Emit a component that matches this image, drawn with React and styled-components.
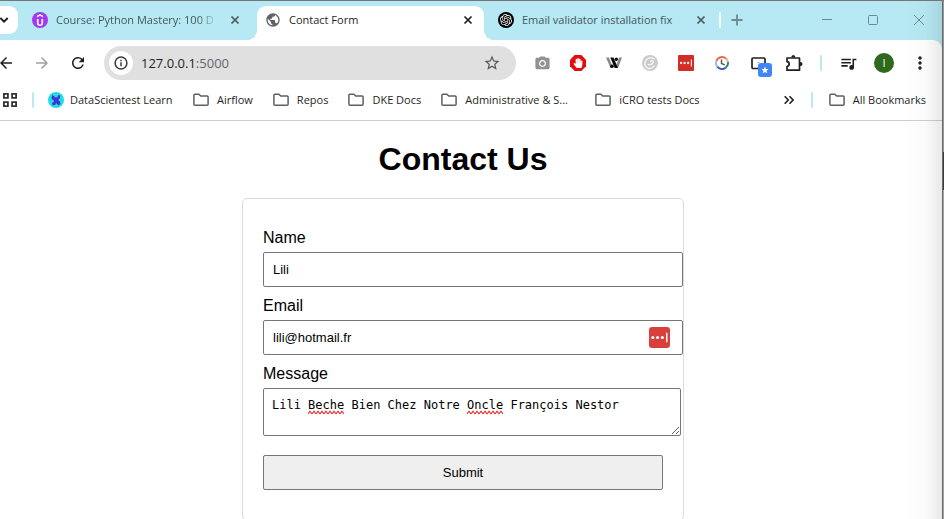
import React from "react";
import styled, { createGlobalStyle, css } from "styled-components";
import {
  MdArrowBack,
  MdArrowForward,
  MdRefresh,
  MdStarBorder,
  MdPublic,
  MdQueueMusic,
  MdMoreVert,
  MdPhotoCamera,
} from "react-icons/md";
import { FaHandPaper } from "react-icons/fa";
import { SiOpenai, SiUdemy } from "react-icons/si";

const GlobalStyle = createGlobalStyle`
  *, *::before, *::after { box-sizing: border-box; }
  body { margin: 0; background: #fff; }
  button { border: 0; padding: 0; background: none; color: inherit; font: inherit; }
  svg { display: block; flex: none; }
`;

const theme = {
  strip: "#b6e9f3",
  ink: "#1f1f23",
  muted: "#46565c",
  ui: '"Open Sans", "Noto Sans", sans-serif',
  page: '"Liberation Sans", Arial, sans-serif',
  mono: '"DejaVu Sans Mono", monospace',
};

const Desktop = styled.div`
  display: flex;
  height: 100vh;
  overflow: hidden;
  border-top: 1px solid #767676;
`;

const BrowserWindow = styled.div`
  position: relative;
  flex: 1;
  min-width: 0;
  display: flex;
  flex-direction: column;
  overflow: hidden;
  background: #fff;
  color: ${theme.ink};
  font: 11px/16px ${theme.ui};
  & > * {
    flex-shrink: 0;
  }
  &::after {
    content: "";
    position: absolute;
    inset: 0 0 0 auto;
    width: 40px;
    pointer-events: none;
    background: linear-gradient(to right, rgba(0, 0, 0, 0), rgba(0, 0, 0, 0.02) 60%, rgba(0, 0, 0, 0.09));
  }
`;

const WindowEdge = styled.div`
  width: 2px;
  border-left: 1px solid #6a6a6a;
  background: linear-gradient(#999 151px, #3c3c3c 151px, #3c3c3c 189px, #a6a6a6 189px);
`;

/* ---------- tab strip ---------- */

const TabStrip = styled.header`
  display: flex;
  align-items: flex-end;
  height: 39px;
  background: ${theme.strip};
`;

const TabSearch = styled.button`
  display: flex;
  align-items: center;
  width: 18px;
  height: 28px;
  margin: 0 6px 6px 0;
  border-radius: 0 9px 9px 0;
  background: #fff;
`;

const Tabs = styled.div`
  display: flex;
  gap: 6px;
  flex: 0 1 693px;
  min-width: 0;
`;

const Foot = css`
  content: "";
  position: absolute;
  bottom: 0;
  width: 10px;
  height: 10px;
`;

const Tab = styled.div`
  position: relative;
  display: flex;
  align-items: center;
  flex: 1 1 0;
  min-width: 0;
  height: 34px;
  padding: 0 8px 6px;
  color: ${theme.muted};
  ${(p) =>
    p.$active &&
    css`
      color: ${theme.ink};
      background: #fff;
      border-radius: 9px 9px 0 0;
      &::before {
        ${Foot}
        left: -10px;
        background: radial-gradient(circle at 0 0, transparent 10px, #fff 10px);
      }
      &::after {
        ${Foot}
        right: -10px;
        background: radial-gradient(circle at 100% 0, transparent 10px, #fff 10px);
      }
    `}
`;

const TabTitle = styled.span`
  flex: 1;
  min-width: 0;
  margin: 0 9px 0 8px;
  overflow: hidden;
  white-space: nowrap;
  ${(p) => p.$fade && css`mask-image: linear-gradient(to left, transparent, #000 20px);`}
`;

const Disc = styled.span`
  display: flex;
  align-items: center;
  justify-content: center;
  flex: none;
  width: ${(p) => p.$size}px;
  height: ${(p) => p.$size}px;
  border-radius: 50%;
  background: ${(p) => p.$fill};
  color: #fff;
`;

const StripButton = styled.button`
  display: flex;
  align-items: center;
  justify-content: center;
  width: ${(p) => p.$width}px;
  height: 28px;
  margin-bottom: 6px;
  color: #6c8a92;
`;

const Spacer = styled.div`
  flex: 1;
`;

const Divider = styled.span`
  flex: none;
  width: 2px;
  height: 16px;
  margin: ${(p) => p.$margin};
  border-radius: 1px;
  background: ${(p) => p.$fill || theme.strip};
`;

/* ---------- toolbar ---------- */

const Toolbar = styled.nav`
  display: flex;
  align-items: center;
  height: 46px;
  padding-right: 4px;
`;

const ToolbarWrap = styled.div`
  background: ${theme.strip};
  & > nav {
    background: #fff;
    border-top-right-radius: 9px;
  }
`;

const Group = styled.div`
  display: flex;
  align-items: center;
  margin-left: ${(p) => p.$pull || 0}px;
`;

const IconButton = styled.button`
  display: flex;
  align-items: center;
  justify-content: center;
  width: 36px;
  height: 36px;
  color: ${(p) => p.$color || theme.ink};
`;

const Omnibox = styled.div`
  display: flex;
  align-items: center;
  flex: 1;
  min-width: 0;
  height: 34px;
  margin: 0 8px;
  padding: 0 6px 0 5px;
  border-radius: 17px;
  background: #e0e0e0;
`;

const Address = styled.div`
  flex: 1;
  min-width: 0;
  margin-left: 8px;
  white-space: nowrap;
  font-size: 13px;
  span { color: #64646a; }
`;

const LastPass = styled.span`
  display: flex;
  align-items: center;
  justify-content: center;
  width: ${(p) => p.$size}px;
  height: ${(p) => p.$size}px;
  border-radius: ${(p) => p.$radius}px;
  background: ${(p) => p.$fill};
`;

/* ---------- bookmarks ---------- */

const BookmarksBar = styled.nav`
  display: flex;
  align-items: center;
  height: 35px;
  padding: 0 16px 6px 3px;
  border-bottom: 1px solid #cfcfcf;
`;

const BookmarkList = styled.div`
  display: flex;
  gap: 20px;
`;

const Bookmark = styled.a`
  display: flex;
  align-items: center;
  gap: ${(p) => p.$gap || 8}px;
  min-width: ${(p) => p.$minWidth || 0}px;
  white-space: nowrap;
  color: ${theme.ink};
  text-decoration: none;
`;

const BareButton = styled.button`
  display: flex;
`;

/* ---------- page ---------- */

const Page = styled.main`
  flex: 1;
  padding: 0 16px 0 0;
  color: #000;
  font: 16px/18px ${theme.page};
`;

const Heading = styled.h1`
  margin: 20px 0;
  text-align: center;
  font-size: 32px;
  line-height: 37px;
`;

const Card = styled.form`
  width: 442px;
  max-width: 100%;
  margin: 0 auto;
  padding: 20px 20px 30px;
  border: 1px solid #ddd;
  border-radius: 5px;
`;

const Label = styled.label`
  display: block;
  margin: 10px 0 5px;
`;

const boxed = css`
  display: block;
  border: 1px solid #767676;
  border-radius: 2px;
  color: #000;
  background: #fff;
  outline: 0;
`;

const FieldWrap = styled.div`
  position: relative;
  width: calc(100% + ${(p) => p.$extra}px);
`;

const TextInput = styled.input`
  ${boxed}
  width: 100%;
  height: 35px;
  padding: 0 9px;
  font: 13px ${theme.page};
`;

const FieldBadge = styled.span`
  position: absolute;
  right: 13px;
  top: 7px;
`;

const MessageBox = styled.textarea`
  ${boxed}
  width: 100%;
  height: 48px;
  padding: 8px;
  font: 12px/16px ${theme.mono};
  resize: both;
`;

const Squiggle = styled.svg`
  position: absolute;
  top: 22px;
  left: calc(9px + ${(p) => p.$start}ch);
  width: ${(p) => p.$length}ch;
  height: 5px;
  font: 12px/16px ${theme.mono};
  pointer-events: none;
`;

const Submit = styled.button`
  ${boxed}
  width: 100%;
  height: 35px;
  margin-top: 19px;
  background: #efefef;
  font: 13px ${theme.page};
`;

/* ---------- drawings ---------- */

const CloseIcon = () => (
  <svg width="16" height="16" viewBox="0 0 16 16" stroke="currentColor" strokeWidth="1.7">
    <path d="M4.500 4.500l7 7M11.500 4.500l-7 7" />
  </svg>
);

const FolderIcon = () => (
  <svg width="16" height="14" viewBox="0 0 16 14" fill="none" stroke="#5d5f62" strokeWidth="1.500" strokeLinejoin="round">
    <path d="M.9 2.200c0-.6.4-1 1-1h4l1.800 1.900h6.400c.6 0 1 .4 1 1v7.200c0 .6-.4 1-1 1H1.900c-.6 0-1-.4-1-1z" />
  </svg>
);

const InfoIcon = () => (
  <svg width="14" height="14" viewBox="0 0 14 14" fill="none" stroke="#3c3c40" strokeWidth="1.500">
    <circle cx="7" cy="7" r="5.900" />
    <path d="M7 6.200v4M7 3.700v1.500" />
  </svg>
);

const WIcon = () => (
  <svg width="16" height="12" viewBox="0 0 16 12">
    <path d="M0 .5h3l4 10.500H4.500z" fill="#8a8a8a" />
    <path d="M13 .5h3L12 11H9.500z" fill="#8a8a8a" />
    <path d="M4.300.5h3.200L12 11H8.700z" fill="#0c0c0c" />
    <circle cx="10.300" cy="2.200" r="1.700" fill="#0c0c0c" />
    <circle cx="6" cy="9.300" r="1.800" fill="#0c0c0c" />
  </svg>
);

const SwirlIcon = () => (
  <svg width="16" height="16" viewBox="0 0 16 16">
    <circle cx="8" cy="8" r="8" fill="#cbcbcb" />
    <g fill="none" stroke="#f8f8f8" strokeWidth="1.300" strokeLinecap="round">
      <path d="M12.200 3.800C9.500 2 5.500 2.700 3.700 5.600c-1.800 3-.7 6.800 2.600 7.700 2.300.6 4.500-.4 5.700-2.300" />
      <path d="M6.200 9.600c2.200.4 5-.9 5.200-2.600.2-1.200-1.500-1.600-3-.6" />
    </g>
  </svg>
);

const DotsIcon = ({ size }) => (
  <svg width={size} height={size} viewBox="0 0 16 16" fill="#fff">
    <circle cx="2.400" cy="8" r="1.300" />
    <circle cx="6.400" cy="8" r="1.300" />
    <circle cx="10.400" cy="8" r="1.300" />
    <rect x="13.500" y="4" width="1.200" height="8" />
  </svg>
);

const ClockIcon = () => (
  <svg width="14" height="14" viewBox="0 0 14 14" fill="none" strokeWidth="2">
    <path d="M1.400 5A6 6 0 0 1 11.200 2.800" stroke="#f0694f" />
    <path d="M11.200 2.800A6 6 0 0 1 12.900 6" stroke="#f4b183" />
    <path d="M12.900 6A6 6 0 0 1 10.500 11.900" stroke="#2d8a72" />
    <path d="M10.500 11.900A6 6 0 0 1 2.200 10.600" stroke="#3f62b8" />
    <path d="M2.200 10.600A6 6 0 0 1 1.400 5" stroke="#8fc0ee" />
    <path d="M6.500 3.500V7.500L9.800 8.800" stroke="#555" strokeWidth="1.400" />
  </svg>
);

const PanelBadgeIcon = () => (
  <svg width="28" height="28" viewBox="-6 -6 28 28">
    <rect x="2" y="3" width="13" height="10.500" rx="1" fill="none" stroke="#222" strokeWidth="1.700" />
    <rect x="7.500" y="7" width="2" height="1" fill="#aaa" />
    <rect x="8" y="8" width="14" height="14" rx="3" fill="#4285f4" />
    <path d="M15 11.500l1 2.400 2.500.2-1.900 1.700.6 2.500-2.200-1.400-2.200 1.400.6-2.500-1.900-1.700 2.500-.2z" fill="#fff" />
  </svg>
);

const PuzzleIcon = () => (
  <svg width="18" height="18" viewBox="0 0 18 18">
    <path
      d="M2 4h12.500v12.200H2v-3.700c1.300-.2 2.200-1.200 2.200-2.400S3.300 7.900 2 7.700z"
      fill="none"
      stroke="#1f1f23"
      strokeWidth="1.700"
      strokeLinejoin="round"
    />
    <path d="M6.200 3.500a2.100 2.600 0 0 1 4.200 0zM15 8a2.600 2.100 0 0 1 0 4.200z" fill="#1f1f23" />
  </svg>
);

const AppsIcon = () => (
  <svg width="14" height="14" viewBox="0 0 14 14" fill="none" stroke="#333" strokeWidth="1.800">
    <path d="M.9.900h4v4h-4zM9.100.900h4v4h-4zM.9 9.100h4v4h-4zM9.100 9.100h4v4h-4z" />
  </svg>
);

const DataScientestIcon = () => (
  <svg width="16" height="16" viewBox="0 0 16 16">
    <circle cx="8" cy="8" r="8" fill="#25dbe0" />
    <path d="M4 3l2.200 1.200.8 1.300 2.500-.3L10.300 3l2 .4-.8 3.300-1.500 1.300 1.700 1.200.8 3-2.500 1-1.300-2-1 .2-.5 1.600-2.700.2-.5-2.200 2-1.300-.5-1.700-1.900-1z" fill="#3f2fdc" />
  </svg>
);

const bookmarks = [
  { name: "Airflow" },
  { name: "Repos" },
  { name: "DKE Docs" },
  { name: "Administrative & S...", minWidth: 134 },
  { name: "iCRO tests Docs" },
];

function FolderLink({ name, minWidth }) {
  return (
    <Bookmark href="#" $minWidth={minWidth}>
      <FolderIcon />
      {name}
    </Bookmark>
  );
}

function BrowserTab({ icon, title, active, fade }) {
  return (
    <Tab $active={active}>
      {icon}
      <TabTitle $fade={fade}>{title}</TabTitle>
      <BareButton aria-label={`Close ${title}`}>
        <CloseIcon />
      </BareButton>
    </Tab>
  );
}

function Wave({ id, start, length }) {
  return (
    <Squiggle $start={start} $length={length} aria-hidden="true">
      <defs>
        <pattern id={id} width="4" height="5" patternUnits="userSpaceOnUse">
          <path d="M0 4L2 1.200 4 4" fill="none" stroke="#f03030" strokeWidth="1.200" />
        </pattern>
      </defs>
      <rect width="100%" height="5" fill={`url(#${id})`} />
    </Squiggle>
  );
}

export default function App() {
  return (
    <>
      <GlobalStyle />
      <Desktop>
        <BrowserWindow>
          <TabStrip>
            <TabSearch aria-label="Search tabs">
              <svg width="10" height="8" viewBox="0 0 10 8" fill="none" stroke="#1f1f23" strokeWidth="2">
                <path d="M.3 2l3.700 3.700L7.700 2" />
              </svg>
            </TabSearch>
            <Tabs>
              <BrowserTab
                icon={<Disc $size={16} $fill="#a435f0"><SiUdemy size={12} /></Disc>}
                title="Course: Python Mastery: 100 D"
                fade
              />
              <BrowserTab active icon={<MdPublic size={16} color="#5f6368" />} title="Contact Form" />
              <BrowserTab
                icon={<Disc $size={16} $fill="#000"><SiOpenai size={12} /></Disc>}
                title="Email validator installation fix"
              />
            </Tabs>
            <Divider $fill="#fff" $margin="0 2px 12px" />
            <StripButton $width={28} aria-label="New tab">
              <svg width="12" height="12" viewBox="0 0 12 12" stroke="currentColor" strokeWidth="1.800">
                <path d="M6 .5v11M.5 6h11" />
              </svg>
            </StripButton>
            <Spacer />
            <StripButton $width={46} aria-label="Minimize">
              <svg width="10" height="10" viewBox="0 0 10 10" stroke="currentColor"><path d="M0 4.500h10" /></svg>
            </StripButton>
            <StripButton $width={46} aria-label="Maximize">
              <svg width="10" height="10" viewBox="0 0 10 10" fill="none" stroke="currentColor"><rect x=".5" y=".5" width="9" height="9" rx="1" /></svg>
            </StripButton>
            <StripButton $width={46} aria-label="Close window">
              <svg width="10" height="10" viewBox="0 0 10 10" stroke="currentColor"><path d="M0 0l10 10M10 0L0 10" /></svg>
            </StripButton>
          </TabStrip>

          <ToolbarWrap>
            <Toolbar>
              <Group $pull={-12}>
                <IconButton aria-label="Back"><MdArrowBack size={18} /></IconButton>
                <IconButton $color="#a2a2a4" aria-label="Forward"><MdArrowForward size={18} /></IconButton>
                <IconButton aria-label="Reload"><MdRefresh size={18} /></IconButton>
              </Group>
              <Omnibox>
                <Disc $size={24} $fill="#fff"><InfoIcon /></Disc>
                <Address>127.0.0.1<span>:5000</span></Address>
                <IconButton $color="#55575b" aria-label="Bookmark this page"><MdStarBorder size={18} /></IconButton>
              </Omnibox>
              <Group>
                <IconButton $color="#929292" aria-label="Screenshot"><MdPhotoCamera size={17} /></IconButton>
                <IconButton aria-label="Ad blocker">
                  <svg width="16" height="16" viewBox="0 0 16 16">
                    <path d="M4.700 0h6.600L16 4.700v6.600L11.300 16H4.700L0 11.300V4.700z" fill="#e40d0d" />
                    <FaHandPaper x="3" y="3" size={10} color="#fff" />
                  </svg>
                </IconButton>
                <IconButton aria-label="W extension"><WIcon /></IconButton>
                <IconButton aria-label="C extension"><SwirlIcon /></IconButton>
                <IconButton aria-label="Password manager">
                  <LastPass $size={16} $radius={1} $fill="#d32d27"><DotsIcon size={14} /></LastPass>
                </IconButton>
                <IconButton aria-label="History"><ClockIcon /></IconButton>
                <IconButton aria-label="Tab groups"><PanelBadgeIcon /></IconButton>
                <IconButton aria-label="Extensions"><PuzzleIcon /></IconButton>
              </Group>
              <Divider $margin="0 8px" />
              <Group>
                <IconButton aria-label="Media"><MdQueueMusic size={19} /></IconButton>
                <IconButton aria-label="Profile"><Disc $size={20} $fill="#2f691d">I</Disc></IconButton>
                <IconButton aria-label="Menu"><MdMoreVert size={20} /></IconButton>
              </Group>
            </Toolbar>
          </ToolbarWrap>

          <BookmarksBar>
            <BareButton aria-label="Apps"><AppsIcon /></BareButton>
            <Divider $margin="0 14px 0 15px" />
            <BookmarkList>
              <Bookmark href="#" $gap={6} $minWidth={125}><DataScientestIcon />DataScientest Learn</Bookmark>
              {bookmarks.map((item) => <FolderLink key={item.name} {...item} />)}
            </BookmarkList>
            <Spacer />
            <BareButton aria-label="More bookmarks">
              <svg width="10" height="10" viewBox="0 0 10 10" fill="none" stroke="#1f1f23" strokeWidth="1.600">
                <path d="M.7 1.200L4.300 5 .7 8.800M5.500 1.200L9.100 5 5.500 8.800" />
              </svg>
            </BareButton>
            <Divider $margin="0 16px 0 17px" />
            <FolderLink name="All Bookmarks" />
          </BookmarksBar>

          <Page>
            <Heading>Contact Us</Heading>
            <Card onSubmit={(e) => e.preventDefault()}>
              <Label htmlFor="name">Name</Label>
              <FieldWrap $extra={20}>
                <TextInput id="name" defaultValue="Lili" />
              </FieldWrap>
              <Label htmlFor="email">Email</Label>
              <FieldWrap $extra={20}>
                <TextInput id="email" type="email" defaultValue="lili@hotmail.fr" />
                <FieldBadge>
                  <LastPass $size={21} $radius={3} $fill="#d93f3b"><DotsIcon size={19} /></LastPass>
                </FieldBadge>
              </FieldWrap>
              <Label htmlFor="message">Message</Label>
              <FieldWrap $extra={18}>
                <MessageBox id="message" spellCheck={false} defaultValue="Lili Beche Bien Chez Notre Oncle François Nestor" />
                <Wave id="wave-beche" start={5} length={5} />
                <Wave id="wave-oncle" start={27} length={5} />
              </FieldWrap>
              <Submit type="submit">Submit</Submit>
            </Card>
          </Page>
        </BrowserWindow>
        <WindowEdge />
      </Desktop>
    </>
  );
}
